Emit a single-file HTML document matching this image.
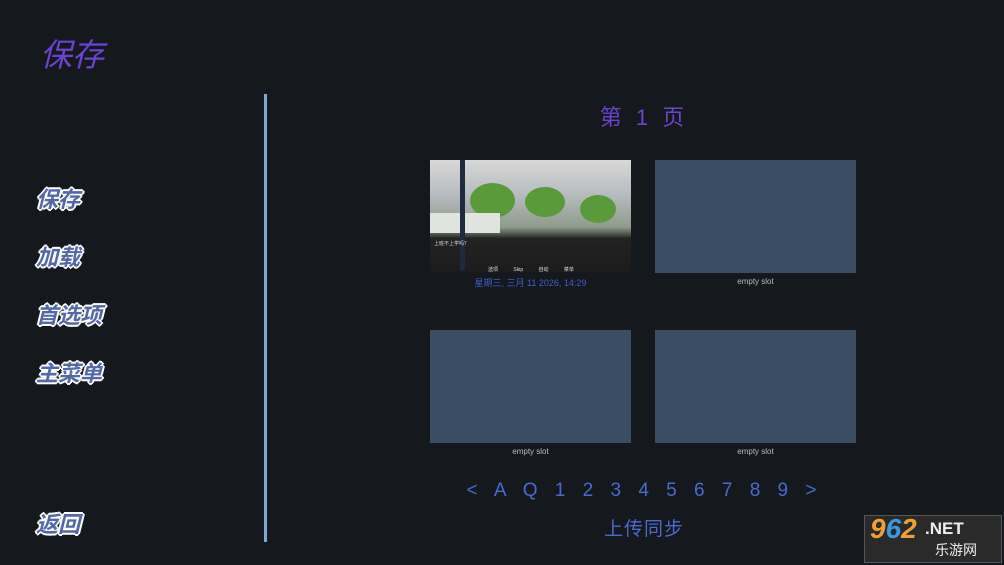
<!DOCTYPE html>
<html><head><meta charset="utf-8"><style>
body{margin:0;width:1004px;height:565px;background:#15181c;position:relative;overflow:hidden;font-family:"Liberation Sans","Noto Sans CJK SC",sans-serif}
.a{position:absolute}
.title{left:40px;top:30px;font-size:32px;color:#6a44d0;font-style:italic}
.m{left:36px;font-size:22px;color:#5468a8;font-weight:bold;font-style:italic;text-shadow:-1px -1px 0 #fff,1px -1px 0 #fff,-1px 1px 0 #fff,1px 1px 0 #fff,0 2px 0 #fff,2px 0 0 #fff,0 -2px 0 #fff,-2px 0 0 #fff}
.slot{background:#3b4d63;width:201px;height:113px}
.lab{font-size:8px;color:#b8bcc4;width:201px;text-align:center}
</style></head><body>
<div class="a title">保存</div>
<div class="a m" style="top:182px">保存</div>
<div class="a m" style="top:240px">加载</div>
<div class="a m" style="top:298px">首选项</div>
<div class="a m" style="top:356px">主菜单</div>
<div class="a m" style="top:507px">返回</div>
<div class="a" style="left:264px;top:94px;width:3px;height:448px;background:#7fa6d6"></div>
<div class="a" style="left:560px;top:100px;width:168px;text-align:center;font-size:22px;color:#6a44d0;letter-spacing:4px;white-space:nowrap">第 1 页</div>

<div class="a" style="left:430px;top:160px;width:201px;height:112px;background:linear-gradient(#d8d8d8 0,#b8bcc0 30%,#8f9a8c 60%,#3a3f3a 68%,#222 70%,#1c1c1e 100%)"></div>
<div class="a" style="left:470px;top:183px;width:45px;height:35px;border-radius:50%;background:#5a9a3a"></div>
<div class="a" style="left:525px;top:187px;width:40px;height:30px;border-radius:50%;background:#5a9a3a"></div>
<div class="a" style="left:580px;top:195px;width:36px;height:28px;border-radius:50%;background:#5a9a3a"></div>
<div class="a" style="left:430px;top:213px;width:70px;height:20px;background:#e0e4e0"></div>
<div class="a" style="left:460px;top:160px;width:5px;height:110px;background:#1f2a40"></div>
<div class="a" style="left:434px;top:240px;font-size:5px;color:#ddd">上班不上学吗？</div>
<div class="a" style="left:488px;top:266px;font-size:5px;color:#ddd;word-spacing:14px;white-space:nowrap">选项 Skip 自动 菜单</div>
<div class="a lab" style="left:430px;top:276px;color:#3d5fcf;font-size:9px">星期三, 三月 11 2026, 14:29</div>

<div class="a slot" style="left:655px;top:160px"></div>
<div class="a lab" style="left:655px;top:277px">empty slot</div>
<div class="a slot" style="left:430px;top:330px"></div>
<div class="a lab" style="left:430px;top:447px">empty slot</div>
<div class="a slot" style="left:655px;top:330px"></div>
<div class="a lab" style="left:655px;top:447px">empty slot</div>

<div class="a" style="left:444px;top:480px;width:400px;text-align:center;font-size:19px;color:#4a6ad0;letter-spacing:5px;word-spacing:2px;white-space:nowrap">&lt; A Q 1 2 3 4 5 6 7 8 9 &gt;</div>
<div class="a" style="left:560px;top:514px;width:168px;text-align:center;font-size:19px;color:#4a6ad0;letter-spacing:1px;white-space:nowrap">上传同步</div>

<div class="a" style="left:864px;top:515px;width:136px;height:46px;background:#2a2a2a;border:1px solid #555"></div>
<div class="a" style="left:870px;top:513px;font-size:28px;font-weight:bold;font-style:italic;color:#f0a030">9<span style="color:#3a9ae0">6</span>2</div>
<div class="a" style="left:925px;top:519px;font-size:17px;font-weight:bold;color:#eee">.NET</div>
<div class="a" style="left:935px;top:540px;font-size:14px;color:#eee">乐游网</div>
</body></html>
